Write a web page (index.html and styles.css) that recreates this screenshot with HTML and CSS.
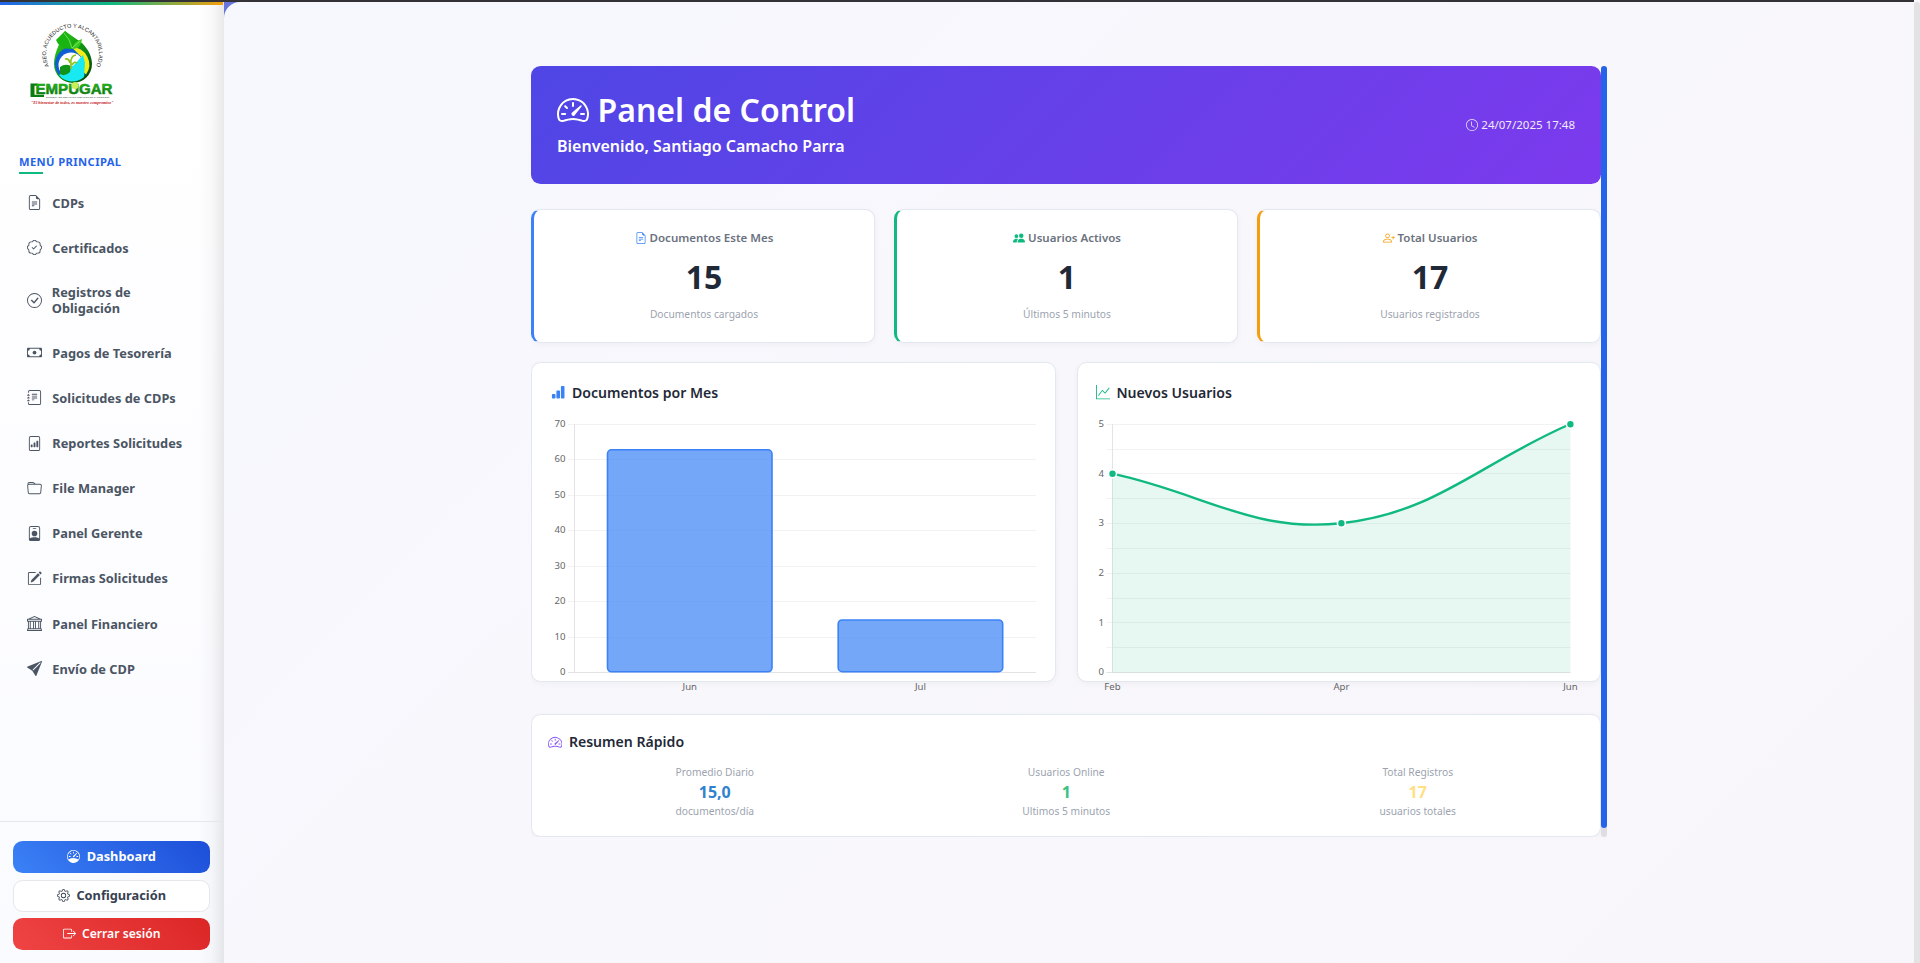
FILE: index.html
```html
<!DOCTYPE html>
<html lang="es">
<head>
<meta charset="utf-8">
<title>Panel de Control</title>
<link rel="stylesheet" href="styles.css">
</head>
<body>
<svg class="sprite" aria-hidden="true">
  <symbol id="file-text" viewBox="0 0 16 16"><path d="M5.5 7a.5.5 0 0 0 0 1h5a.5.5 0 0 0 0-1zM5 9.5a.5.5 0 0 1 .5-.5h5a.5.5 0 0 1 0 1h-5a.5.5 0 0 1-.5-.5m0 2a.5.5 0 0 1 .5-.5h2a.5.5 0 0 1 0 1h-2a.5.5 0 0 1-.5-.5"/><path d="M9.5 0H4a2 2 0 0 0-2 2v12a2 2 0 0 0 2 2h8a2 2 0 0 0 2-2V4.500zm0 1v2A1.500 1.500 0 0 0 11 4.500h2V14a1 1 0 0 1-1 1H4a1 1 0 0 1-1-1V2a1 1 0 0 1 1-1z"/></symbol>
  <symbol id="patch-check" viewBox="0 0 16 16"><path d="M10.354 6.146a.5.5 0 0 1 0 .708l-3 3a.5.5 0 0 1-.708 0l-1.500-1.500a.5.5 0 1 1 .708-.708L7 8.793l2.646-2.647a.5.5 0 0 1 .708 0"/><path d="m10.273 2.513-.921-.944.715-.698.622.637.89-.011a2.890 2.890 0 0 1 2.924 2.924l-.01.89.636.622a2.890 2.890 0 0 1 0 4.134l-.637.622.011.89a2.890 2.890 0 0 1-2.924 2.924l-.89-.01-.622.636a2.890 2.890 0 0 1-4.134 0l-.622-.637-.89.011a2.890 2.890 0 0 1-2.924-2.924l.01-.89-.636-.622a2.890 2.890 0 0 1 0-4.134l.637-.622-.011-.89a2.890 2.890 0 0 1 2.924-2.924l.89.01.622-.636a2.890 2.890 0 0 1 4.134 0l-.715.698a1.890 1.890 0 0 0-2.704 0l-.92.944-1.320-.016a1.890 1.890 0 0 0-1.911 1.912l.016 1.318-.944.921a1.890 1.890 0 0 0 0 2.704l.944.92-.016 1.320a1.890 1.890 0 0 0 1.912 1.911l1.318-.016.921.944a1.890 1.890 0 0 0 2.704 0l.92-.944 1.320.016a1.890 1.890 0 0 0 1.911-1.912l-.016-1.318.944-.921a1.890 1.890 0 0 0 0-2.704l-.944-.92.016-1.320a1.890 1.890 0 0 0-1.912-1.911z"/></symbol>
  <symbol id="check-circle" viewBox="0 0 16 16"><path d="M8 15A7 7 0 1 1 8 1a7 7 0 0 1 0 14m0 1A8 8 0 1 0 8 0a8 8 0 0 0 0 16"/><path d="m10.970 4.970-.02.022-3.473 4.425-2.093-2.094a.75.75 0 0 0-1.060 1.060L6.970 11.030a.75.75 0 0 0 1.079-.02l3.992-4.990a.75.75 0 0 0-1.071-1.050"/></symbol>
  <symbol id="cash" viewBox="0 0 16 16"><path d="M8 10a2 2 0 1 0 0-4 2 2 0 0 0 0 4"/><path d="M0 4a1 1 0 0 1 1-1h14a1 1 0 0 1 1 1v8a1 1 0 0 1-1 1H1a1 1 0 0 1-1-1zm3 0a2 2 0 0 1-2 2v4a2 2 0 0 1 2 2h10a2 2 0 0 1 2-2V6a2 2 0 0 1-2-2z"/></symbol>
  <symbol id="journal" viewBox="0 0 16 16"><path d="M5 10.500a.5.5 0 0 1 .5-.5h2a.5.5 0 0 1 0 1h-2a.5.5 0 0 1-.5-.5m0-2a.5.5 0 0 1 .5-.5h5a.5.5 0 0 1 0 1h-5a.5.5 0 0 1-.5-.5m0-2a.5.5 0 0 1 .5-.5h5a.5.5 0 0 1 0 1h-5a.5.5 0 0 1-.5-.5m0-2a.5.5 0 0 1 .5-.5h5a.5.5 0 0 1 0 1h-5a.5.5 0 0 1-.5-.5"/><path d="M3 0h10a2 2 0 0 1 2 2v12a2 2 0 0 1-2 2H3a2 2 0 0 1-2-2v-1h1v1a1 1 0 0 0 1 1h10a1 1 0 0 0 1-1V2a1 1 0 0 0-1-1H3a1 1 0 0 0-1 1v1H1V2a2 2 0 0 1 2-2"/><path d="M1 5v-.5a.5.5 0 0 1 1 0V5h.5a.5.5 0 0 1 0 1h-2a.5.5 0 0 1 0-1zm0 3v-.5a.5.5 0 0 1 1 0V8h.5a.5.5 0 0 1 0 1h-2a.5.5 0 0 1 0-1zm0 3v-.5a.5.5 0 0 1 1 0v.5h.5a.5.5 0 0 1 0 1h-2a.5.5 0 0 1 0-1z"/></symbol>
  <symbol id="file-graph" viewBox="0 0 16 16"><path d="M4.500 12a.5.5 0 0 1-.5-.5v-2a.5.5 0 0 1 .5-.5h1a.5.5 0 0 1 .5.5v2a.5.5 0 0 1-.5.5zm3 0a.5.5 0 0 1-.5-.5v-4a.5.5 0 0 1 .5-.5h1a.5.5 0 0 1 .5.5v4a.5.5 0 0 1-.5.5zm3 0a.5.5 0 0 1-.5-.5v-6a.5.5 0 0 1 .5-.5h1a.5.5 0 0 1 .5.5v6a.5.5 0 0 1-.5.5z"/><path d="M4 0a2 2 0 0 0-2 2v12a2 2 0 0 0 2 2h8a2 2 0 0 0 2-2V2a2 2 0 0 0-2-2zm0 1h8a1 1 0 0 1 1 1v12a1 1 0 0 1-1 1H4a1 1 0 0 1-1-1V2a1 1 0 0 1 1-1"/></symbol>
  <symbol id="folder" viewBox="0 0 16 16"><path d="M.54 3.870.5 3a2 2 0 0 1 2-2h3.672a2 2 0 0 1 1.414.586l.828.828A2 2 0 0 0 9.828 3h3.982a2 2 0 0 1 1.992 2.181l-.637 7A2 2 0 0 1 13.174 14H2.826a2 2 0 0 1-1.991-1.819l-.637-7a2 2 0 0 1 .342-1.310zM2.190 4a1 1 0 0 0-.996 1.090l.637 7a1 1 0 0 0 .995.91h10.348a1 1 0 0 0 .995-.91l.637-7A1 1 0 0 0 13.810 4zm4.690-1.707A1 1 0 0 0 6.172 2H2.500a1 1 0 0 0-1 .981l.006.139q.323-.119.684-.12h5.396z"/></symbol>
  <symbol id="badge" viewBox="0 0 16 16"><path d="M6.500 2a.5.5 0 0 0 0 1h3a.5.5 0 0 0 0-1zM11 8a3 3 0 1 1-6 0 3 3 0 0 1 6 0"/><path d="M4.500 0A2.500 2.500 0 0 0 2 2.500V14a2 2 0 0 0 2 2h8a2 2 0 0 0 2-2V2.500A2.500 2.500 0 0 0 11.500 0zM3 2.500A1.500 1.500 0 0 1 4.500 1h7A1.500 1.500 0 0 1 13 2.500v10.795a4.200 4.200 0 0 0-.776-.492C11.392 12.387 10.063 12 8 12s-3.392.387-4.224.803a4.200 4.200 0 0 0-.776.492z"/></symbol>
  <symbol id="pencil" viewBox="0 0 16 16"><path d="M15.502 1.940a.5.5 0 0 1 0 .706L14.459 3.690l-2-2L13.502.646a.5.5 0 0 1 .707 0l1.293 1.293zm-1.750 2.456-2-2L4.939 9.210a.5.5 0 0 0-.121.196l-.805 2.414a.25.25 0 0 0 .316.316l2.414-.805a.5.5 0 0 0 .196-.12l6.813-6.814z"/><path d="M1 13.500A1.500 1.500 0 0 0 2.500 15h11a1.500 1.500 0 0 0 1.500-1.500v-6a.5.5 0 0 0-1 0v6a.5.5 0 0 1-.5.5h-11a.5.5 0 0 1-.5-.5v-11a.5.5 0 0 1 .5-.5H9a.5.5 0 0 0 0-1H2.500A1.500 1.500 0 0 0 1 2.500z"/></symbol>
  <symbol id="bank" viewBox="0 0 16 16"><path d="m8 0 6.610 3h.89a.5.5 0 0 1 .5.5v2a.5.5 0 0 1-.5.5H15v7a.5.5 0 0 1 .485.38l.5 2a.498.498 0 0 1-.485.62H.5a.498.498 0 0 1-.485-.62l.5-2A.5.5 0 0 1 1 13V6H.5a.5.5 0 0 1-.5-.5v-2A.5.5 0 0 1 .5 3h.89zM3.777 3h8.447L8 1zM2 6v7h1V6zm2 0v7h2.500V6zm3.500 0v7h1V6zm2 0v7H12V6zM13 6v7h1V6zm2-1V4H1v1zm-.39 9H1.390l-.25 1h13.720z"/></symbol>
  <symbol id="send" viewBox="0 0 16 16"><path d="M15.964.686a.5.5 0 0 0-.65-.65L.767 5.855H.766l-.452.18a.5.5 0 0 0-.082.887l.41.26.001.002 4.995 3.178 3.178 4.995.002.002.26.41a.5.5 0 0 0 .886-.083zm-1.833 1.890L6.637 10.070l-.215-.338a.5.5 0 0 0-.154-.154l-.338-.215 7.494-7.494 1.178-.471z"/></symbol>
  <symbol id="speed2" viewBox="0 0 16 16"><path d="M8 4a.5.5 0 0 1 .5.5V6a.5.5 0 0 1-1 0V4.500A.5.5 0 0 1 8 4M3.732 5.732a.5.5 0 0 1 .707 0l.915.914a.5.5 0 1 1-.708.708l-.914-.915a.5.5 0 0 1 0-.707M2 10a.5.5 0 0 1 .5-.5h1.586a.5.5 0 0 1 0 1H2.500A.5.5 0 0 1 2 10m9.500 0a.5.5 0 0 1 .5-.5h1.500a.5.5 0 0 1 0 1H12a.5.5 0 0 1-.5-.5m.754-4.246a.39.39 0 0 0-.527-.02L7.547 9.310a.91.91 0 1 0 1.302 1.258l3.434-4.297a.39.39 0 0 0-.029-.518z"/><path d="M0 10a8 8 0 1 1 15.547 2.661c-.442 1.253-1.845 1.602-2.932 1.250C11.309 13.488 9.475 13 8 13c-1.474 0-3.310.488-4.615.911-1.087.352-2.490.003-2.932-1.250A8 8 0 0 1 0 10m8-7a7 7 0 0 0-6.603 9.329c.203.575.923.876 1.680.63C4.397 12.533 6.358 12 8 12s3.604.532 4.923.96c.757.245 1.477-.056 1.680-.631A7 7 0 0 0 8 3"/></symbol>
  <symbol id="speed" viewBox="0 0 16 16"><path d="M8 2a.5.5 0 0 1 .5.5V4a.5.5 0 0 1-1 0V2.500A.5.5 0 0 1 8 2M3.732 3.732a.5.5 0 0 1 .707 0l.915.914a.5.5 0 1 1-.708.708l-.914-.915a.5.5 0 0 1 0-.707M2 8a.5.5 0 0 1 .5-.5h1.586a.5.5 0 0 1 0 1H2.500A.5.5 0 0 1 2 8m9.500 0a.5.5 0 0 1 .5-.5h1.500a.5.5 0 0 1 0 1H12a.5.5 0 0 1-.5-.5m.754-4.246a.39.39 0 0 0-.527-.02L7.547 7.310A.91.91 0 1 0 8.850 8.569l3.434-4.297a.39.39 0 0 0-.029-.518z"/><path d="M6.664 15.889A8 8 0 1 1 9.336.11a8 8 0 0 1-2.672 15.780zm-4.665-4.283A11.950 11.950 0 0 1 8 10c2.186 0 4.236.585 6.001 1.606a7 7 0 1 0-12.002 0"/></symbol>
  <symbol id="gear" viewBox="0 0 16 16"><path d="M8 4.754a3.246 3.246 0 1 0 0 6.492 3.246 3.246 0 0 0 0-6.492M5.754 8a2.246 2.246 0 1 1 4.492 0 2.246 2.246 0 0 1-4.492 0"/><path d="M9.796 1.343c-.527-1.790-3.065-1.790-3.592 0l-.094.319a.873.873 0 0 1-1.255.52l-.292-.16c-1.640-.892-3.433.902-2.540 2.541l.159.292a.873.873 0 0 1-.52 1.255l-.319.094c-1.790.527-1.790 3.065 0 3.592l.319.094a.873.873 0 0 1 .52 1.255l-.16.292c-.892 1.640.901 3.434 2.541 2.540l.292-.159a.873.873 0 0 1 1.255.52l.094.319c.527 1.790 3.065 1.790 3.592 0l.094-.319a.873.873 0 0 1 1.255-.52l.292.16c1.640.893 3.434-.902 2.540-2.541l-.159-.292a.873.873 0 0 1 .52-1.255l.319-.094c1.790-.527 1.790-3.065 0-3.592l-.319-.094a.873.873 0 0 1-.52-1.255l.16-.292c.893-1.640-.902-3.433-2.541-2.540l-.292.159a.873.873 0 0 1-1.255-.52zm-2.633.283c.246-.835 1.428-.835 1.674 0l.094.319a1.873 1.873 0 0 0 2.693 1.115l.291-.16c.764-.415 1.600.42 1.184 1.185l-.159.292a1.873 1.873 0 0 0 1.116 2.692l.318.094c.835.246.835 1.428 0 1.674l-.319.094a1.873 1.873 0 0 0-1.115 2.693l.16.291c.415.764-.42 1.600-1.185 1.184l-.291-.159a1.873 1.873 0 0 0-2.693 1.116l-.094.318c-.246.835-1.428.835-1.674 0l-.094-.319a1.873 1.873 0 0 0-2.692-1.115l-.292.16c-.764.415-1.600-.42-1.184-1.185l.159-.291A1.873 1.873 0 0 0 1.945 8.930l-.319-.094c-.835-.246-.835-1.428 0-1.674l.319-.094A1.873 1.873 0 0 0 3.060 4.377l-.16-.292c-.415-.764.42-1.600 1.185-1.184l.292.159a1.873 1.873 0 0 0 2.692-1.115z"/></symbol>
  <symbol id="exit" viewBox="0 0 16 16"><path d="M10 12.500a.5.5 0 0 1-.5.5h-8a.5.5 0 0 1-.5-.5v-9a.5.5 0 0 1 .5-.5h8a.5.5 0 0 1 .5.5v2a.5.5 0 0 0 1 0v-2A1.500 1.500 0 0 0 9.500 2h-8A1.500 1.500 0 0 0 0 3.500v9A1.500 1.500 0 0 0 1.500 14h8a1.500 1.500 0 0 0 1.500-1.500v-2a.5.5 0 0 0-1 0z"/><path d="M15.854 8.354a.5.5 0 0 0 0-.708l-3-3a.5.5 0 0 0-.708.708L14.293 7.500H5.500a.5.5 0 0 0 0 1h8.793l-2.147 2.146a.5.5 0 0 0 .708.708z"/></symbol>
  <symbol id="clock" viewBox="0 0 16 16"><path d="M8 3.500a.5.5 0 0 0-1 0V9a.5.5 0 0 0 .252.434l3.500 2a.5.5 0 0 0 .496-.868L8 8.710z"/><path d="M8 16A8 8 0 1 0 8 0a8 8 0 0 0 0 16m7-8A7 7 0 1 1 1 8a7 7 0 0 1 14 0"/></symbol>
  <symbol id="people" viewBox="0 0 16 16"><path d="M7 14s-1 0-1-1 1-4 5-4 5 3 5 4-1 1-1 1zm4-6a3 3 0 1 0 0-6 3 3 0 0 0 0 6m-5.784 6A2.240 2.240 0 0 1 5 13c0-1.355.68-2.750 1.936-3.720A6.300 6.300 0 0 0 5 9c-4 0-5 3-5 4s1 1 1 1zM4.500 8a2.500 2.500 0 1 0 0-5 2.500 2.500 0 0 0 0 5"/></symbol>
  <symbol id="person-plus" viewBox="0 0 16 16"><path d="M6 8a3 3 0 1 0 0-6 3 3 0 0 0 0 6m2-3a2 2 0 1 1-4 0 2 2 0 0 1 4 0m4 8c0 1-1 1-1 1H1s-1 0-1-1 1-4 6-4 6 3 6 4m-1-.004c-.001-.246-.154-.986-.832-1.664C9.516 10.680 8.289 10 6 10s-3.516.68-4.168 1.332c-.678.678-.83 1.418-.832 1.664z"/><path d="M13.500 5a.5.5 0 0 1 .5.5V7h1.500a.5.5 0 0 1 0 1H14v1.500a.5.5 0 0 1-1 0V8h-1.500a.5.5 0 0 1 0-1H13V5.500a.5.5 0 0 1 .5-.5"/></symbol>
  <symbol id="bars" viewBox="0 0 16 16"><path d="M1 11a1 1 0 0 1 1-1h2a1 1 0 0 1 1 1v3a1 1 0 0 1-1 1H2a1 1 0 0 1-1-1zm5-4a1 1 0 0 1 1-1h2a1 1 0 0 1 1 1v7a1 1 0 0 1-1 1H7a1 1 0 0 1-1-1zm5-5a1 1 0 0 1 1-1h2a1 1 0 0 1 1 1v12a1 1 0 0 1-1 1h-2a1 1 0 0 1-1-1z"/></symbol>
  <symbol id="graph-up" viewBox="0 0 16 16"><path d="M0 0h1v15h15v1H0zm14.817 3.113a.5.5 0 0 1 .07.704l-4.500 5.500a.5.5 0 0 1-.74.037L7.060 6.767l-3.656 5.027a.5.5 0 0 1-.808-.588l4-5.500a.5.5 0 0 1 .758-.06l2.609 2.610 4.150-5.073a.5.5 0 0 1 .704-.07"/></symbol>
</svg>

<div class="topline"></div>
<div class="app">
  <aside class="sidebar">
    <div class="rainbow"></div>
    <svg class="logo" viewBox="0 0 90 90">
      <defs>
        <linearGradient id="drop" x1="0" y1="0" x2="1" y2="1"><stop offset="0" stop-color="#35d61a"/><stop offset=".6" stop-color="#0a8a12"/><stop offset="1" stop-color="#04300a"/></linearGradient>
        <linearGradient id="word" x1="0" y1="0" x2="0" y2="1"><stop offset="0" stop-color="#25d516"/><stop offset="1" stop-color="#075d0c"/></linearGradient>
        <path id="arc" d="M22 47.600A26.500 26.500 0 1 1 65 47.600"/>
      </defs>
      <path d="M36 9c-3 9-11 20-11 33a19 19 0 0 0 38 0c0-9-5-16-10-21Z" fill="url(#drop)"/>
      <circle cx="43" cy="42" r="17" fill="#0d5fd2"/>
      <path d="M43 25.500a17 17 0 0 1 14 27l-5-5 3-10Z" fill="#f4ee12"/>
      <circle cx="42" cy="43" r="12.500" fill="#fff"/>
      <path d="m54 33-9 10-8 5-7 5a17 17 0 0 0 25 2l1-14Z" fill="#19eaf2"/>
      <path d="M31 45q5-4 11-1l-1 6q-5 5-10 2Z" fill="#14931a"/>
      <path d="M36 37q4-1 5 4m6-8q-6 1-5 9v5m6-6q-3-2-5 2" fill="none" stroke="#8bc51e" stroke-width="1.700"/>
      <path d="M27 18 36 9q8 6 7 18-13 0-16-9Z" fill="#18b512"/><path d="M43 27q2-8 10-10-1 10-10 10" fill="#37cb1c"/>
      <path d="M35 11q6 6 8 15l8-7" fill="none" stroke="#b4f28b" stroke-width=".6"/>
      <text class="logo-arc"><textPath href="#arc" startOffset="50%">ASEO, ACUEDUCTO Y ALCANTARILLADO</textPath></text>
      <path d="M1.500 61.500h7v2.200H5.500v9H15v2.300H1.500Z" fill="#0a7d12"/>
      <text class="logo-word" x="6.500" y="72" textLength="77" lengthAdjust="spacingAndGlyphs">EMPUGAR</text>
      <circle cx="46" cy="63.500" r="3.500" fill="#c9ee58"/>
      <text class="logo-sub" x="17" y="76">EMPRESA DE SERVICIOS PUBLICOS DE GARZON ESP</text>
      <text class="logo-slogan" x="2" y="82">"El bienestar de todos, es nuestro compromiso"</text>
    </svg>
    <h2 class="menu-title">MENÚ PRINCIPAL</h2>
    <nav class="menu">
      <a class="item"><svg><use href="#file-text"/></svg><span>CDPs</span></a>
      <a class="item"><svg><use href="#patch-check"/></svg><span>Certificados</span></a>
      <a class="item tall"><svg><use href="#check-circle"/></svg><span>Registros de Obligación</span></a>
      <a class="item"><svg><use href="#cash"/></svg><span>Pagos de Tesorería</span></a>
      <a class="item"><svg><use href="#journal"/></svg><span>Solicitudes de CDPs</span></a>
      <a class="item"><svg><use href="#file-graph"/></svg><span>Reportes Solicitudes</span></a>
      <a class="item"><svg><use href="#folder"/></svg><span>File Manager</span></a>
      <a class="item"><svg><use href="#badge"/></svg><span>Panel Gerente</span></a>
      <a class="item"><svg><use href="#pencil"/></svg><span>Firmas Solicitudes</span></a>
      <a class="item"><svg><use href="#bank"/></svg><span>Panel Financiero</span></a>
      <a class="item"><svg><use href="#send"/></svg><span>Envío de CDP</span></a>
    </nav>
    <div class="actions">
      <a class="btn primary"><svg><use href="#speed"/></svg>Dashboard</a>
      <a class="btn plain"><svg><use href="#gear"/></svg>Configuración</a>
      <a class="btn danger"><svg><use href="#exit"/></svg>Cerrar sesión</a>
    </div>
  </aside>

  <div class="backdrop">
    <main class="main">
      <div class="scroller">
        <div class="content">
          <header class="hero">
            <div>
              <h1><svg><use href="#speed2"/></svg>Panel de Control</h1>
              <p>Bienvenido, Santiago Camacho Parra</p>
            </div>
            <div class="date"><svg><use href="#clock"/></svg>24/07/2025 17:48</div>
          </header>

          <section class="stats">
            <article class="stat blue"><h3><svg><use href="#file-text"/></svg>Documentos Este Mes</h3><strong>15</strong><small>Documentos cargados</small></article>
            <article class="stat green"><h3><svg><use href="#people"/></svg>Usuarios Activos</h3><strong>1</strong><small>Últimos 5 minutos</small></article>
            <article class="stat amber"><h3><svg><use href="#person-plus"/></svg>Total Usuarios</h3><strong>17</strong><small>Usuarios registrados</small></article>
          </section>

          <section class="charts">
            <article class="card">
              <h4 class="docs"><svg><use href="#bars"/></svg>Documentos por Mes</h4>
              <svg class="chart" viewBox="0 0 522 280">
                <path class="grid" d="M36 12.500H504M36 47.500H504M36 83.500H504M36 118.500H504M36 154.500H504M36 189.500H504M36 225.500H504"/>
                <path class="axis" d="M42.500 12V261M36 260.500H504"/>
                <rect class="bar" x="75.500" y="37.800" width="164.500" height="222" rx="4"/>
                <rect class="bar" x="306.200" y="208" width="164.500" height="51.700" rx="4"/>
                <g class="ticks y"><text x="33.500" y="15">70</text><text x="33.500" y="50">60</text><text x="33.500" y="86">50</text><text x="33.500" y="121">40</text><text x="33.500" y="157">30</text><text x="33.500" y="192">20</text><text x="33.500" y="228">10</text><text x="33.500" y="263">0</text></g>
                <g class="ticks x"><text x="157.800" y="278">Jun</text><text x="388.500" y="278">Jul</text></g>
              </svg>
            </article>
            <article class="card">
              <h4 class="users"><svg><use href="#graph-up"/></svg>Nuevos Usuarios</h4>
              <svg class="chart" viewBox="0.5 0 522 280">
                <path class="grid" d="M29 12.500H493M29 37.500H493M29 61.500H493M29 86.500H493M29 111.500H493M29 136.500H493M29 161.500H493M29 186.500H493M29 210.500H493M29 235.500H493"/>
                <path class="axis" d="M35 12V261M29 260.500H493"/>
                <path class="area" d="M35 61.700C126.600 81.500 175.300 120.800 263.900 111.200 358.400 100.900 401.300 51.700 492.900 12V260.500H35Z"/>
                <path class="line" d="M35 61.700C126.600 81.500 175.300 120.800 263.900 111.200 358.400 100.900 401.300 51.700 492.900 12"/>
                <g class="dots"><circle cx="35" cy="61.700" r="4"/><circle cx="263.900" cy="111.300" r="4"/><circle cx="492.900" cy="12.200" r="4"/></g>
                <g class="ticks y"><text x="26.500" y="15">5</text><text x="26.500" y="65">4</text><text x="26.500" y="114">3</text><text x="26.500" y="164">2</text><text x="26.500" y="214">1</text><text x="26.500" y="263">0</text></g>
                <g class="ticks x"><text x="35" y="278">Feb</text><text x="263.900" y="278">Apr</text><text x="493" y="278">Jun</text></g>
              </svg>
            </article>
          </section>

          <section class="card summary">
            <h4><svg><use href="#speed2"/></svg>Resumen Rápido</h4>
            <div class="figures">
              <div><small>Promedio Diario</small><b class="c-blue">15,0</b><small>documentos/día</small></div>
              <div><small>Usuarios Online</small><b class="c-green">1</b><small>Ultimos 5 minutos</small></div>
              <div><small>Total Registros</small><b class="c-yellow">17</b><small>usuarios totales</small></div>
            </div>
          </section>
        </div>
        <div class="track"><div class="thumb"></div></div>
      </div>
    </main>
    <div class="page-scroll"></div>
  </div>
</div>
</body>
</html>
```
FILE: styles.css
```css
* { box-sizing: border-box; }
body { margin: 0; height: 963px; overflow: hidden; display: flex; flex-direction: column; font-family: "Noto Sans", sans-serif; color: #1f2937; }
h1, h2, h3, h4, p { margin: 0; }
svg { fill: currentColor; flex: none; }
.sprite { display: none; }
.topline { height: 2px; background: #333236; flex: none; }
.app { flex: 1; display: flex; min-height: 0; }

.sidebar { width: 224px; flex: none; display: flex; flex-direction: column; background: linear-gradient(90deg, transparent 198px, rgba(0, 0, 0, .025) 212px, rgba(0, 0, 0, .085) 224px), linear-gradient(180deg, #fff, #fafbff); }
.rainbow { height: 3px; width: 223px; background: linear-gradient(90deg, #2563eb, #10b981 50%, #f59e0b); flex: none; }
.logo { width: 90px; height: 90px; margin: 17px 0 0 29px; overflow: visible; }
.logo-arc { font: 5.500px "Liberation Sans", sans-serif; fill: #222; text-anchor: middle; }
.logo-word { font: bold 14px "Liberation Sans", sans-serif; fill: url(#word); stroke: #168e13; stroke-width: .5px; }
.logo-sub { font: 2.450px "Liberation Sans", sans-serif; fill: #444; }
.logo-slogan { font: bold italic 4.200px "Liberation Serif", serif; fill: #c51522; }
.menu-title { margin: 42px 0 0 19px; padding-bottom: 3px; height: 20px; font-size: 11.200px; line-height: 16px; font-weight: 700; letter-spacing: .4px; color: #2563eb; }
.menu-title::after { content: ""; display: block; width: 24px; height: 2px; background: #10b981; margin-top: 2px; }
.menu { padding: 6px 0 0 27px; }
.item { display: flex; align-items: center; gap: 10.300px; height: 45.150px; font-size: 12.800px; line-height: 16px; font-weight: 700; color: #4b5563; }
.item.tall { height: 59.900px; }
.item.tall span { width: 110px; }
.item.tall svg { margin-right: -.5px; }
.item svg { width: 15px; height: 15px; }
.actions { margin-top: auto; height: 142px; width: 223px; border-top: 1px solid #e5e7eb; padding: 19px 13px 0; display: flex; flex-direction: column; gap: 6.500px; }
.btn { height: 32px; border-radius: 9.600px; display: flex; align-items: center; justify-content: center; gap: 6.400px; font-size: 12.800px; font-weight: 700; padding-bottom: 1px; }
.btn svg { width: 13px; height: 13px; }
.primary { color: #fff; background: linear-gradient(45deg, #3b82f6, #1d4ed8); padding-bottom: 2px; }
.plain { color: #374151; background: #fff; border: 1px solid #e5e7eb; }
.danger { color: #fff; background: linear-gradient(45deg, #ef4444, #dc2626); font-size: 12.160px; font-weight: 600; }

.backdrop { flex: 1; display: flex; min-width: 0; background: #6875dc; }
.main { flex: 1; border-radius: 16px 0 0 0; background: linear-gradient(135deg, #f6f8fe, #f8f7fc 45%, #f8f6fb); padding: 64px 0 0 307px; }
.page-scroll { width: 6px; background: #e3e3e3; border-radius: 3px 3px 0 0; box-shadow: 0 -8px 0 #f8f6fb; }
.scroller { display: flex; height: 770.500px; overflow: hidden; width: 1076px; }
.content { width: 1070px; }
.track { width: 6px; background: #dddde2; border-radius: 3px; }
.thumb { height: 762px; background: #2563eb; border-radius: 3px; }
.hero { height: 118px; border-radius: 9.600px; padding: 25px 26px 0; background: linear-gradient(135deg, #4f46e5, #7c3aed); color: #fff; display: flex; justify-content: space-between; align-items: flex-start; }
.hero h1 { display: flex; align-items: center; gap: 8.500px; font-size: 32px; line-height: 38.400px; font-weight: 600; }
.hero h1 svg { width: 32px; height: 32px; }
.hero p { margin-top: 4.600px; font-size: 16px; line-height: 24px; font-weight: 600; }
.date { display: flex; align-items: center; gap: 3px; font-size: 11.520px; height: 67px; opacity: .9; }
.date svg { width: 12px; height: 12px; }

.stats { margin-top: 25px; display: grid; grid-template-columns: repeat(3, 344px); justify-content: space-between; }
.stat { height: 134px; background: #fff; border: 1px solid #e2e8f0; border-left-width: 3px; border-radius: 9.600px; box-shadow: 0 2px 6px rgba(0, 0, 0, .04); display: flex; flex-direction: column; align-items: center; padding-top: 19px; }
.blue { border-left-color: #3b82f6; }
.green { border-left-color: #10b981; }
.amber { border-left-color: #f59e0b; }
.stat h3 { display: flex; align-items: center; gap: 3px; font-size: 11.520px; line-height: 18px; font-weight: 600; color: #6b7280; }
.stat h3 svg { width: 12px; height: 12px; }
.blue svg { color: #3b82f6; }
.green svg { color: #10b981; }
.amber svg { color: #f59e0b; }
.stat strong { margin-top: 11px; font-size: 32px; line-height: 38px; font-weight: 700; }
small { font-size: 10.240px; line-height: 16px; color: #9ca3af; }
.stat small { margin-top: 9.500px; }

.card { background: #fff; border: 1px solid #e2e8f0; border-radius: 9.600px; box-shadow: 0 2px 6px rgba(0, 0, 0, .04); }
.charts { margin-top: 19px; display: grid; grid-template-columns: 1fr 1fr; gap: 21px; }
.charts .card { height: 319.500px; }
h4 { display: flex; align-items: center; font-size: 14.080px; font-weight: 600; line-height: 20px; }
.charts h4 { height: 49px; padding: 10px 0 0 19px; gap: 6.500px; }
.charts .users { padding-left: 18px; }
h4 svg { width: 14.400px; height: 14.400px; }
.docs svg { color: #3b82f6; }
.users svg { color: #10b981; }
.chart { display: block; width: 522px; height: 280px; overflow: visible; }
.grid { fill: none; stroke: #f2f2f3; }
.axis { fill: none; stroke: #e2e3e5; }
.bar { fill: rgba(59, 130, 246, .7); stroke: #3b82f6; stroke-width: 1.600px; }
.area { fill: rgba(16, 185, 129, .1); }
.line { fill: none; stroke: #10b981; stroke-width: 2.400px; }
.dots { fill: #10b981; stroke: #fff; stroke-width: 1.600px; }
.ticks { font-size: 9.600px; fill: #666; }
.ticks.y { text-anchor: end; }
.ticks.x { text-anchor: middle; }

.summary { margin-top: 32.500px; height: 122.500px; padding: 17px 0 0; }
.summary h4 { padding-left: 16px; gap: 6.500px; }
.summary h4 svg { color: #8b5cf6; }
.figures { display: grid; grid-template-columns: repeat(3, 351.500px); margin: 12px 0 0 7px; }
.figures div { display: flex; flex-direction: column; align-items: center; }
.figures b { font-size: 16px; line-height: 23px; font-weight: 700; padding-top: 1px; margin-bottom: -1px; }
.c-blue { color: #3182ce; }
.c-green { color: #38c284; }
.c-yellow { color: #ffe082; }
```
